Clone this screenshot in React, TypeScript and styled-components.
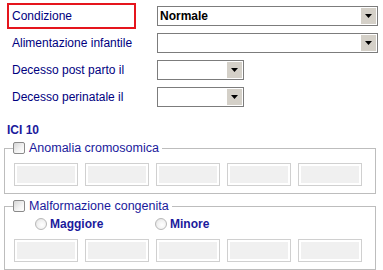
import * as React from 'react';
import styled, { createGlobalStyle } from 'styled-components';

const GlobalStyle = createGlobalStyle`
    body {
        margin: 0;
        background: #ffffff;
        font-family: "Liberation Sans", Arial, sans-serif;
    }
`;

const Page = styled.div`
    width: 383px;
    height: 270px;
    overflow: hidden;
    box-sizing: border-box;
    padding-top: 3px;
`;

const Rows = styled.div`
    display: grid;
    grid-template-columns: 150px auto;
    grid-auto-rows: 26px;
    row-gap: 1px;
    align-items: center;
    padding-left: 7px;
`;

const FieldLabel = styled.div<{ $highlight?: boolean }>`
    box-sizing: border-box;
    width: 129px;
    height: 26px;
    border: 2px solid ${(p) => (p.$highlight ? '#e5151d' : 'transparent')};
    padding-left: 3px;
    display: flex;
    align-items: center;
    font-size: 12px;
    color: #000080;
    white-space: nowrap;
`;

const SelectBox = styled.div<{ $width: number }>`
    box-sizing: border-box;
    width: ${(p) => p.$width}px;
    height: 20px;
    border: 1px solid #7c7c7c;
    padding: 1px;
    background: #fff;
    display: flex;
    align-items: stretch;
`;

const SelectValue = styled.div`
    flex: 1;
    padding-left: 1px;
    font-size: 12px;
    font-weight: bold;
    line-height: 16px;
    color: #000;
`;

const ArrowButton = styled.div`
    width: 15px;
    background: #d4d0c8;
    display: flex;
    align-items: center;
    justify-content: center;
`;

const SectionTitle = styled.div`
    margin: 13px 0 4px 7px;
    font-size: 12px;
    font-weight: bold;
    line-height: 14px;
    color: #1a1a9c;
`;

const Group = styled.fieldset<{ $gapTop?: number }>`
    margin: ${(p) => p.$gapTop ?? 0}px 7px 0 4px;
    border: 1px solid #bdbdbd;
    padding: 8px 7px 7px 9px;
    min-width: 0;
`;

const GroupLegend = styled.legend`
    display: flex;
    align-items: center;
    gap: 4px;
    margin-left: -1px;
    padding: 0 3px 0 0;
    height: 14px;
    font-size: 12.5px;
    color: #1a1a9c;
`;

const CheckBox = styled.span`
    box-sizing: border-box;
    width: 12px;
    height: 12px;
    border: 1px solid #8a8a8a;
    border-radius: 2px;
    background: linear-gradient(135deg, #d6d6d6 0%, #f4f4f4 60%, #ffffff 100%);
`;

const BoxRow = styled.div`
    display: flex;
    gap: 7px;
`;

const CodeBox = styled.div`
    box-sizing: border-box;
    width: 64px;
    height: 23px;
    border: 1px solid #d0d0d0;
    box-shadow: inset 0 0 0 2px #ffffff;
    background: #f0f0f0;
`;

const RadioRow = styled.div`
    display: flex;
    align-items: center;
    height: 16px;
    margin: -5px 0 7px;
    padding-left: 21px;
`;

const RadioOption = styled.label`
    display: flex;
    align-items: center;
    gap: 3px;
    width: 120px;
    font-size: 12px;
    font-weight: bold;
    color: #1a1a9c;
`;

const RadioDot = styled.span`
    box-sizing: border-box;
    width: 12px;
    height: 12px;
    border: 1px solid #b8b8b8;
    border-radius: 50%;
    background: radial-gradient(circle at 60% 60%, #ffffff 0%, #f2f2f2 50%, #dcdcdc 100%);
`;

function Select({ width, value }: { width: number; value?: string }) {
    return (
        <SelectBox $width={width}>
            <SelectValue>{value}</SelectValue>
            <ArrowButton>
                <svg width="7" height="4" viewBox="0 0 7 4">
                    <polygon points="0,0 7,0 3.5,4" fill="#000" />
                </svg>
            </ArrowButton>
        </SelectBox>
    );
}

function Boxes() {
    return (
        <BoxRow>
            {[0, 1, 2, 3, 4].map((i) => (
                <CodeBox key={i} />
            ))}
        </BoxRow>
    );
}

export default function App(): React.ReactElement {
    return (
        <Page>
            <GlobalStyle />
            <Rows>
                <FieldLabel $highlight>Condizione</FieldLabel>
                <Select width={221} value="Normale" />
                <FieldLabel>Alimentazione infantile</FieldLabel>
                <Select width={221} />
                <FieldLabel>Decesso post parto il</FieldLabel>
                <Select width={87} />
                <FieldLabel>Decesso perinatale il</FieldLabel>
                <Select width={87} />
            </Rows>

            <SectionTitle>ICI 10</SectionTitle>

            <Group>
                <GroupLegend>
                    <CheckBox />
                    Anomalia cromosomica
                </GroupLegend>
                <Boxes />
            </Group>

            <Group $gapTop={5}>
                <GroupLegend>
                    <CheckBox />
                    Malformazione congenita
                </GroupLegend>
                <RadioRow>
                    <RadioOption>
                        <RadioDot />
                        Maggiore
                    </RadioOption>
                    <RadioOption>
                        <RadioDot />
                        Minore
                    </RadioOption>
                </RadioRow>
                <Boxes />
            </Group>
        </Page>
    );
}
